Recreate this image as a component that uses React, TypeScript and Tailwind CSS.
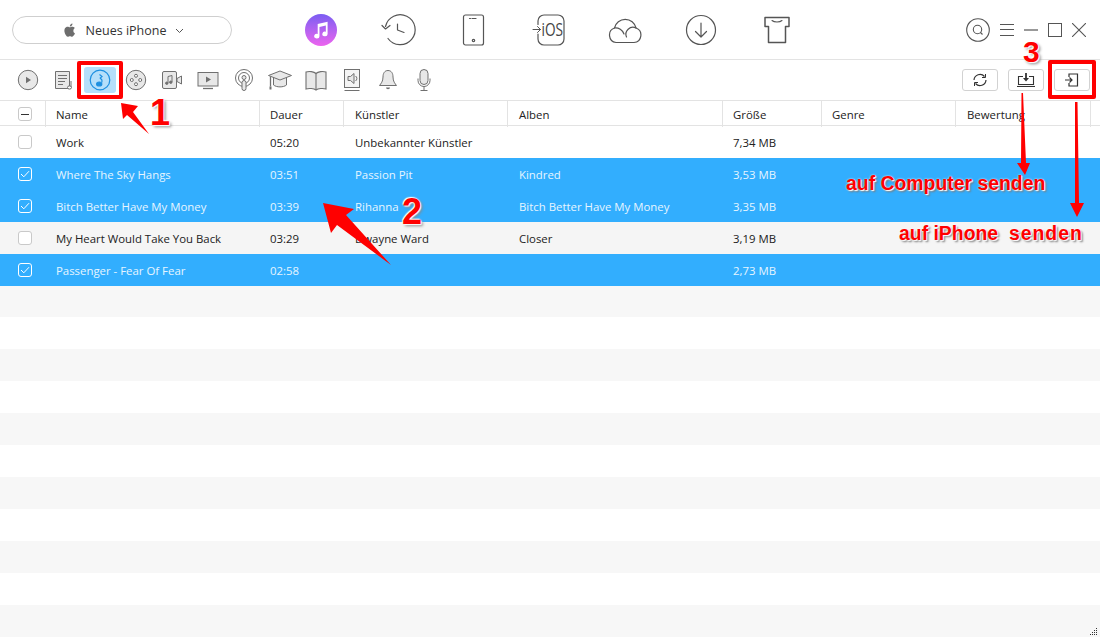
import type { ReactNode } from "react";

const GRID = "grid grid-cols-[45px_214px_84px_164px_215px_99px_134px_135px_10px]";

const songs = [
  { name: "Work", time: "05:20", artist: "Unbekannter Künstler", album: "", size: "7,34 MB", on: false },
  { name: "Where The Sky Hangs", time: "03:51", artist: "Passion Pit", album: "Kindred", size: "3,53 MB", on: true },
  { name: "Bitch Better Have My Money", time: "03:39", artist: "Rihanna", album: "Bitch Better Have My Money", size: "3,35 MB", on: true },
  { name: "My Heart Would Take You Back", time: "03:29", artist: "Dwayne Ward", album: "Closer", size: "3,19 MB", on: false },
  { name: "Passenger - Fear Of Fear", time: "02:58", artist: "", album: "", size: "2,73 MB", on: true },
];

const columns = [
  { title: "Name", pad: "pl-[10px]" },
  { title: "Dauer", pad: "pl-[10px]" },
  { title: "Künstler", pad: "pl-[11px]" },
  { title: "Alben", pad: "pl-[11px]" },
  { title: "Größe", pad: "pl-[10px]" },
  { title: "Genre", pad: "pl-[10px]" },
  { title: "Bewertung", pad: "pl-[11px]" },
  { title: "", pad: "" },
];

const emptyRows = Array.from({ length: 11 }, (_, i) => i);

function Ico({ w = 24, h = 24, children }: { w?: number; h?: number; children: ReactNode }) {
  return (
    <svg width={w} height={h} viewBox={`0 0 ${w} ${h}`} fill="none" stroke="currentColor" strokeWidth="1.2" strokeLinecap="round" strokeLinejoin="round">
      {children}
    </svg>
  );
}

function TopIcons() {
  return (
    <div className="flex items-center text-[#555]">
      <div className="w-[76px] flex justify-center">
        <div className="w-8 h-8 rounded-full bg-gradient-to-b from-[#7a5cf2] to-[#ec62ee] flex items-center justify-center">
          <svg width="22" height="22" viewBox="0 0 20 20" fill="white">
            <path d="M7 4.500 16 2.500V13.600a2.400 2.100 0 1 1-1.600-2V6L8.600 7.300V15.600a2.400 2.100 0 1 1-1.600-2Z" />
          </svg>
        </div>
      </div>
      <div className="w-[76px] flex justify-center pl-[4px]">
        <Ico w={36} h={36}>
          <path d="M4.500 14.500A15 15 0 1 1 7 26.500" />
          <path d="M1 13.500 4.500 17 9 13.500" />
          <path d="M16.500 12V18L23 20.500" />
        </Ico>
      </div>
      <div className="w-[76px] flex justify-center">
        <Ico w={24} h={32}>
          <rect x="2.500" y="1" width="20" height="30" rx="2" />
          <path d="M8.500 4.500h1M11 4.500h4" />
          <circle cx="12.500" cy="26.500" r="1.200" />
        </Ico>
      </div>
      <div className="w-[76px] flex justify-center pl-[2px]">
        <svg width="36" height="32" viewBox="0 0 36 32" fill="none" stroke="currentColor" strokeWidth="1.200" strokeLinecap="round">
          <path d="M6 10.500V7a6 6 0 0 1 6-6h14a6 6 0 0 1 6 6v18a6 6 0 0 1-6 6H12a6 6 0 0 1-6-6v-5" />
          <path d="M1 15.500h7.500M5.500 12.500l3 3-3 3" strokeWidth="1" />
          <text x="9.500" y="22" fontSize="18" textLength="21.500" lengthAdjust="spacingAndGlyphs" fill="#444" stroke="none" fontFamily="'Open Sans', sans-serif">iOS</text>
        </svg>
      </div>
      <div className="w-[76px] flex justify-center">
        <Ico w={34} h={28}>
          <path d="M8 26.500H26a7.500 7.500 0 0 0 2-14.500 11 11 0 0 0-21.500 0A7.500 7.500 0 0 0 8 26.500Z" />
          <path d="M6.500 12a9 9 0 0 1 9.500 6M18.500 21a7 7 0 0 1 9.500-9" />
        </Ico>
      </div>
      <div className="w-[76px] flex justify-center">
        <Ico w={32} h={32}>
          <circle cx="16" cy="16" r="14.500" />
          <path d="M16 9v14M10.500 17.500 16 23l5.500-5.500" />
        </Ico>
      </div>
      <div className="w-[76px] flex justify-center">
        <svg width="26" height="28" viewBox="0 0 26 28" fill="none" stroke="currentColor" strokeWidth="1.500" strokeLinejoin="round" strokeLinecap="round">
          <path d="M1 1.500h24v9h-3.500v16h-17v-16H1Z" />
          <path d="M8 4.500a6 3.500 0 0 0 10 0" strokeWidth="1.100" />
        </svg>
      </div>
    </div>
  );
}

function SubIcons() {
  const fillGray = "#e8e8e8";
  const stroke = "#707070";
  const items: ReactNode[] = [
    <svg key="play" width="22" height="22" viewBox="0 0 22 22" fill={fillGray} stroke={stroke} strokeWidth="1">
      <circle cx="11" cy="11" r="9.700" />
      <path d="M9 7.800v6.400l5-3.200Z" fill={stroke} stroke="none" />
    </svg>,
    <svg key="list" width="22" height="24" viewBox="0 0 22 24" fill={fillGray} stroke={stroke} strokeWidth="1">
      <path d="M2.500 3.500h14v17h-14Z" />
      <path d="M5 7.500h9M5 10.500h9M5 13.500h7M5 16.500h5" fill="none" />
      <path d="M18 13v6" fill="none" />
      <ellipse cx="16.500" cy="19.500" rx="2" ry="1.600" fill="#fff" />
    </svg>,
    <svg key="music" width="22" height="22" viewBox="0 0 22 22" fill="none" stroke="#1d8fe0" strokeWidth="1.200">
      <circle cx="11" cy="11" r="9.800" />
      <path d="M10.500 5.500 13 7.500l-1.800 1.500 1.700 2v2.500" />
      <ellipse cx="10.200" cy="15" rx="2.600" ry="2" fill="#1d8fe0" />
    </svg>,
    <svg key="film" width="22" height="22" viewBox="0 0 22 22" fill={fillGray} stroke={stroke} strokeWidth="1">
      <circle cx="11" cy="11" r="9.700" />
      <circle cx="11" cy="6.800" r="1.500" fill="#fff" />
      <circle cx="11" cy="15.200" r="1.500" fill="#fff" />
      <circle cx="6.800" cy="11" r="1.500" fill="#fff" />
      <circle cx="15.200" cy="11" r="1.500" fill="#fff" />
    </svg>,
    <svg key="video" width="22" height="22" viewBox="0 0 22 22" fill={fillGray} stroke={stroke} strokeWidth="1">
      <rect x="1.500" y="2.500" width="14" height="17" rx="1.500" />
      <path d="M16 9.500 20.500 7v8L16 12.500Z" />
      <path d="M7 14V7.500l4-1V13" fill="none" />
      <circle cx="5.800" cy="14.200" r="1.200" fill={stroke} />
      <circle cx="9.800" cy="13.200" r="1.200" fill={stroke} />
    </svg>,
    <svg key="tv" width="24" height="22" viewBox="0 0 24 22" fill={fillGray} stroke={stroke} strokeWidth="1">
      <rect x="2" y="3.500" width="20" height="13.500" />
      <path d="M10 7.500v6l5-3Z" fill={stroke} stroke="none" />
      <path d="M7 19.500h10" fill="none" strokeWidth="1.300" />
    </svg>,
    <svg key="podcast" width="22" height="24" viewBox="0 0 22 24" fill="none" stroke={stroke} strokeWidth="1">
      <circle cx="11" cy="10" r="8.500" />
      <circle cx="11" cy="10" r="5.500" />
      <circle cx="11" cy="9.500" r="2" fill={fillGray} />
      <rect x="9" y="12.500" width="4" height="10" rx="2" fill={fillGray} />
    </svg>,
    <svg key="grad" width="26" height="24" viewBox="0 0 26 24" fill={fillGray} stroke={stroke} strokeWidth="1">
      <path d="M6.500 9.500V17c3 2.500 10 2.500 13 0V9.500" />
      <path d="M1.500 7.500 13 3l11.500 4.500L13 12Z" />
      <path d="M3.500 8.500v10" fill="none" strokeWidth="1.300" />
      <path d="M3.500 18.500v3" fill="none" strokeWidth="2" />
    </svg>,
    <svg key="book" width="24" height="24" viewBox="0 0 24 24" fill={fillGray} stroke={stroke} strokeWidth="1.100">
      <path d="M12 5.500C10 3.500 5 3 2 4V21c3-1 8-.5 10 1 2-1.500 7-2 10-1V4c-3-1-8-.5-10 1.500Z" />
      <path d="M12 5.500V22" fill="none" />
    </svg>,
    <svg key="audio" width="20" height="24" viewBox="0 0 20 24" fill={fillGray} stroke={stroke} strokeWidth="1">
      <rect x="2.500" y="1.500" width="15" height="18" fill="#f4f4f4" />
      <path d="M2.500 22.500h15" fill="none" />
      <path d="M6 8.500h2.500l3.500-3v10l-3.500-3H6Z" />
      <path d="M13.500 8a3 3 0 0 1 0 5" fill="none" />
    </svg>,
    <svg key="bell" width="22" height="24" viewBox="0 0 22 24" fill={fillGray} stroke={stroke} strokeWidth="1">
      <path d="M11 2.500c-3.500 0-5 3-5 6.500 0 4.500-2 6.500-3.500 8.500h17C18 15.500 16 13.500 16 9c0-3.500-1.500-6.500-5-6.500Z" />
      <path d="M9 19.500a2 1.800 0 0 0 4 0Z" fill={stroke} stroke="none" />
    </svg>,
    <svg key="mic" width="18" height="24" viewBox="0 0 18 24" fill={fillGray} stroke={stroke} strokeWidth="1">
      <rect x="5" y="1.500" width="8" height="15" rx="4" />
      <path d="M3 10.500v2a6 6 0 0 0 12 0v-2M9 18.500v3.500M5.500 22.500h7" fill="none" />
    </svg>,
  ];

  return (
    <div className="flex pl-[10px]">
      {items.map((icon, i) => (
        <div key={i} className="w-9 flex justify-center">
          {i === 2 ? (
            <div className="w-8 h-[26px] rounded-[3px] bg-[#b5dffa] flex items-center justify-center">{icon}</div>
          ) : (
            <div className="h-[26px] flex items-center">{icon}</div>
          )}
        </div>
      ))}
    </div>
  );
}

function CheckBox({ state }: { state: "off" | "on" | "mixed" }) {
  if (state === "on") {
    return (
      <span className="w-[14px] h-[14px] rounded-[3px] border border-white flex items-center justify-center">
        <svg width="10" height="8" viewBox="0 0 10 8" fill="none" stroke="white" strokeWidth="1">
          <path d="M1 4 3.800 6.800 9 1.200" />
        </svg>
      </span>
    );
  }
  return (
    <span className="w-[14px] h-[14px] rounded-[3px] border border-[#c9c9c9] bg-white flex items-center justify-center">
      {state === "mixed" && <span className="w-[8px] h-px bg-[#333]" />}
    </span>
  );
}

function ActionButton({ children }: { children: ReactNode }) {
  return (
    <button className="w-9 h-[22px] rounded-[3px] border border-[#d2d2d2] bg-white flex items-center justify-center text-[#333]">
      {children}
    </button>
  );
}

function Annotations() {
  return (
    <>
      <div className="absolute left-[77px] top-[61px] w-[46px] h-[38px] border-4 border-[#ff0000] rounded-[2px]" />
      <div className="absolute left-[1048px] top-[60px] w-[48px] h-[39px] border-4 border-[#ff0000] rounded-[2px]" />

      <svg className="absolute left-0 top-0 pointer-events-none" width="1100" height="640" fill="#ff0000">
        <path d="M121 103 138 106 133 112 149 134 127 115 123 119Z" />
        <path d="M323 203 354 209 346 215 391 265 337 225 331 233Z" />
        <path d="M1021.500 93h1.500L1026 163h4L1025 175 1017 163h4Z" />
        <path d="M1075 102h2.500L1079 203h5L1077 217 1070 203h5Z" />
      </svg>

      <span className="absolute left-[150px] top-[96px] text-[36px] leading-[34px] font-bold text-[#ff0000] font-['Liberation_Sans',sans-serif] [text-shadow:0_0_2px_#fff,1px_1px_1px_#fff,-1px_-1px_1px_#fff,2px_2px_3px_#888]">1</span>
      <span className="absolute left-[402px] top-[195px] text-[36px] leading-[34px] font-bold text-[#ff0000] font-['Liberation_Sans',sans-serif] [text-shadow:0_0_2px_#fff,1px_1px_1px_#fff,-1px_-1px_1px_#fff,2px_2px_3px_#888]">2</span>
      <span className="absolute left-[1023px] top-[35px] text-[30px] leading-[34px] font-bold text-[#ff0000] font-['Liberation_Sans',sans-serif] [text-shadow:0_0_2px_#fff,1px_1px_1px_#fff,-1px_-1px_1px_#fff,2px_2px_3px_#888]">3</span>

      <span className="absolute left-[846px] top-[173px] text-[19.400px] leading-5 font-bold whitespace-nowrap text-[#ff0000] font-['Liberation_Sans',sans-serif] [text-shadow:0_0_2px_#fff,1px_1px_1px_#fff,2px_2px_2px_#777]">auf Computer senden</span>
      <span className="absolute left-[899px] top-[223px] text-[19.400px] leading-5 font-bold whitespace-pre text-[#ff0000] font-['Liberation_Sans',sans-serif] [text-shadow:0_0_2px_#fff,1px_1px_1px_#fff,2px_2px_2px_#777]">
        auf iPhone{"  "}
        <span className="tracking-[1px]">senden</span>
      </span>
    </>
  );
}

export default function App() {
  return (
    <div className="relative w-[1100px] h-[640px] overflow-hidden bg-white text-[11.400px] text-[#222] font-['Open_Sans',sans-serif]">
      {/* top bar */}
      <header className="h-[60px] border-b border-[#e3e3e3] flex items-center">
        <div className="w-[283px] pl-3">
          <button className="w-[220px] h-7 rounded-full border border-[#cfcfcf] flex items-center justify-center gap-[8px] text-[12.500px] text-[#333]">
            <svg className="ml-[2px]" width="16" height="16" viewBox="0 0 24 24" fill="#6d6d6d">
              <path d="M17.100 12.700c0-2.500 2-3.700 2.100-3.800-1.200-1.700-3-1.900-3.600-1.900-1.500-.2-3 .9-3.800.9s-2-.9-3.300-.9c-1.700 0-3.300 1-4.100 2.500-1.800 3-.5 7.500 1.200 10 .8 1.200 1.800 2.500 3.100 2.500s1.700-.8 3.200-.8 1.900.8 3.200.8 2.200-1.200 3-2.400c1-1.400 1.300-2.700 1.400-2.800-.1 0-2.400-.9-2.400-3.100ZM14.700 5.300c.7-.8 1.100-1.900 1-3.100-1 0-2.200.7-2.900 1.500-.6.700-1.200 1.900-1 3 1.100.1 2.200-.6 2.900-1.400Z" />
            </svg>
            <span className="pt-[4px]">Neues iPhone</span>
            <svg className="ml-[1px] mt-[2px]" width="9" height="6" viewBox="0 0 9 6" fill="none" stroke="#555" strokeWidth="1">
              <path d="M1 1 4.500 4.500 8 1" />
            </svg>
          </button>
        </div>
        <TopIcons />
        <div className="ml-auto pr-[14px] flex items-center gap-[10px] text-[#555]">
          <svg width="24" height="24" viewBox="0 0 24 24" fill="none" stroke="currentColor" strokeWidth="1.100">
            <circle cx="12" cy="12" r="11.300" />
            <circle cx="11.500" cy="11.500" r="4.200" />
            <path d="m14.500 14.500 2 2" />
          </svg>
          <svg width="14" height="12" viewBox="0 0 14 12" stroke="currentColor" strokeWidth="1">
            <path d="M0 .5h14M0 5.500h14M0 11.500h14" />
          </svg>
          <svg width="14" height="2" viewBox="0 0 14 2" stroke="currentColor" strokeWidth="1.200">
            <path d="M0 1h14" />
          </svg>
          <span className="w-[14px] h-[14px] border-[1.500px] border-[#555]" />
          <svg width="14" height="14" viewBox="0 0 14 14" stroke="currentColor" strokeWidth="1.100">
            <path d="m0 0 14 14M14 0 0 14" />
          </svg>
        </div>
      </header>

      {/* toolbar */}
      <div className="h-[41px] border-b border-[#e3e3e3] flex items-center justify-between pr-[10px]">
        <SubIcons />
        <div className="flex gap-[10px]">
          <ActionButton>
            <svg width="16" height="14" viewBox="0 0 16 14" fill="none" stroke="currentColor" strokeWidth="1.200">
              <path d="M2 7a6 6 0 0 1 10.500-3.500M14 7a6 6 0 0 1-10.500 3.500" />
              <path d="M13.500 1v3.500H10M2.500 13V9.500H6" strokeWidth="1" />
            </svg>
          </ActionButton>
          <ActionButton>
            <svg width="18" height="14" viewBox="0 0 18 14" fill="none" stroke="currentColor" strokeWidth="1.100">
              <path d="M6 3.500H1.500v8h15v-8H12" />
              <path d="M0 13.500h18" />
              <path d="M9 0v6" strokeWidth="1.800" />
              <path d="M6 5h6L9 8.500Z" fill="currentColor" stroke="none" />
            </svg>
          </ActionButton>
          <ActionButton>
            <svg width="14" height="14" viewBox="0 0 14 14" fill="none" stroke="currentColor" strokeWidth="1.200">
              <path d="M4 4V1h8.500v12H4v-3" />
              <path d="M0 7h7M4.500 4.500 7 7 4.500 9.500" />
            </svg>
          </ActionButton>
        </div>
      </div>

      {/* table head */}
      <div className={`${GRID} h-[25px] border-b border-[#e3e3e3] items-center`}>
        <div className="pl-[18px]">
          <CheckBox state="mixed" />
        </div>
        {columns.map((col) => (
          <div key={col.title} className={`h-full border-l border-[#e3e3e3] ${col.pad} pt-px leading-[25px] text-[#222]`}>
            {col.title}
          </div>
        ))}
      </div>

      {/* rows */}
      {songs.map((song, i) => (
        <div
          key={song.name}
          className={`${GRID} h-8 items-center ${song.on ? "bg-[#32aefe] text-[#e6f5ff]" : i % 2 === 1 ? "bg-[#f5f5f5]" : "bg-white"}`}
        >
          <div className="pl-[18px]">
            <CheckBox state={song.on ? "on" : "off"} />
          </div>
          <div className="pl-[11px] pt-px">{song.name}</div>
          <div className="pl-[11px] pt-px">{song.time}</div>
          <div className="pl-3 pt-px">{song.artist}</div>
          <div className="pl-3 pt-px">{song.album}</div>
          <div className="pl-[11px] pt-px">{song.size}</div>
        </div>
      ))}
      {emptyRows.map((i) => (
        <div key={i} className={`${i === 0 ? "h-[31px]" : "h-8"} ${i % 2 === 0 ? "bg-[#f7f7f7]" : "bg-white"}`} />
      ))}

      {/* resize grip */}
      <svg className="absolute left-[1089px] top-[627px]" width="10" height="10" viewBox="0 0 10 10" fill="#333">
        <rect x="7" y="1" width="1" height="1" />
        <rect x="7" y="3" width="1" height="1" />
        <rect x="5" y="3" width="1" height="1" />
        <rect x="7" y="5" width="1" height="1" />
        <rect x="5" y="5" width="1" height="1" />
        <rect x="3" y="5" width="1" height="1" />
        <rect x="7" y="7" width="1" height="1" />
        <rect x="5" y="7" width="1" height="1" />
        <rect x="3" y="7" width="1" height="1" />
        <rect x="1" y="7" width="1" height="1" />
      </svg>

      <Annotations />
    </div>
  );
}
